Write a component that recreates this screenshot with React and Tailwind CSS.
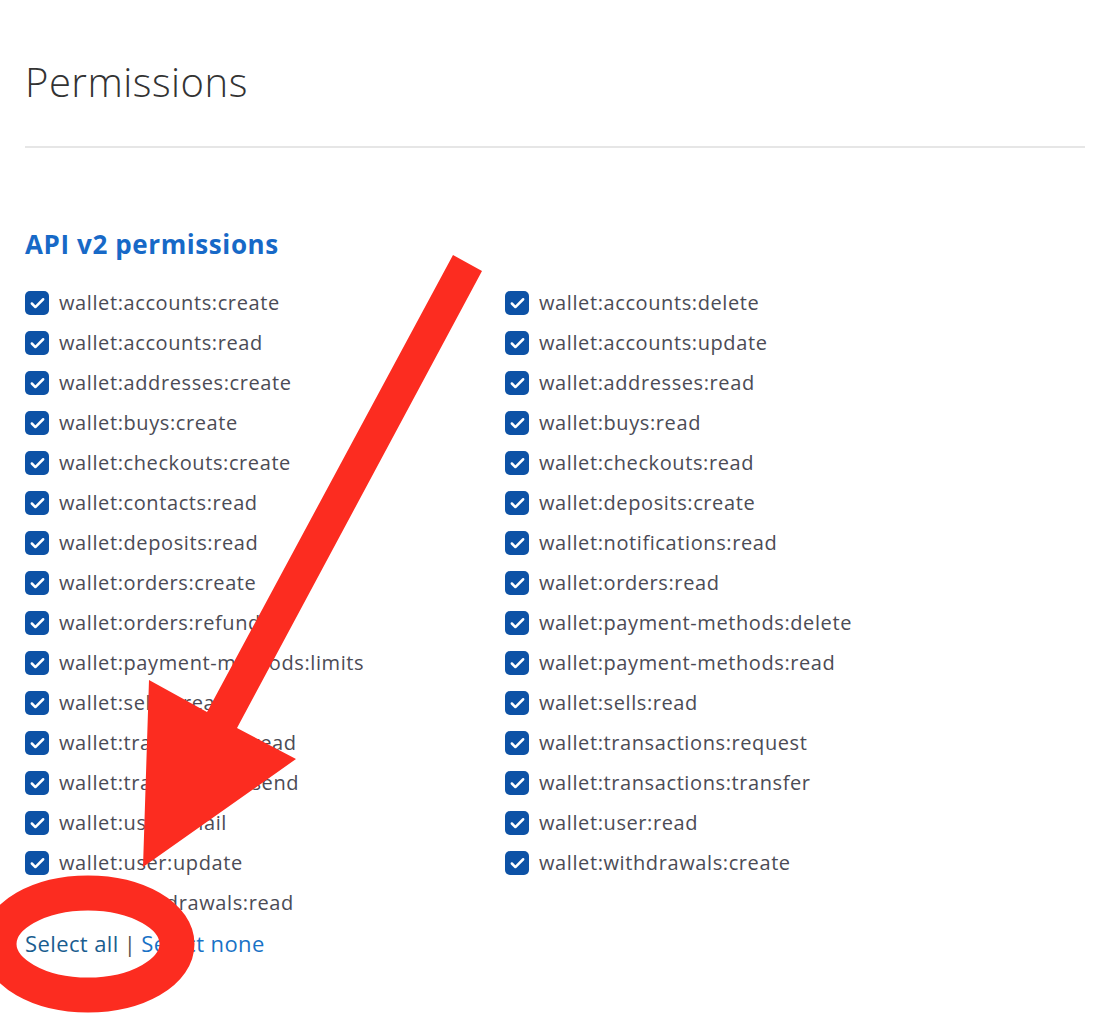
import { Check } from 'lucide-react'

const left = [
  'wallet:accounts:create',
  'wallet:accounts:read',
  'wallet:addresses:create',
  'wallet:buys:create',
  'wallet:checkouts:create',
  'wallet:contacts:read',
  'wallet:deposits:read',
  'wallet:orders:create',
  'wallet:orders:refund',
  'wallet:payment-methods:limits',
  'wallet:sells:create',
  'wallet:transactions:read',
  'wallet:transactions:send',
  'wallet:user:email',
  'wallet:user:update',
  'wallet:withdrawals:read',
]

const right = [
  'wallet:accounts:delete',
  'wallet:accounts:update',
  'wallet:addresses:read',
  'wallet:buys:read',
  'wallet:checkouts:read',
  'wallet:deposits:create',
  'wallet:notifications:read',
  'wallet:orders:read',
  'wallet:payment-methods:delete',
  'wallet:payment-methods:read',
  'wallet:sells:read',
  'wallet:transactions:request',
  'wallet:transactions:transfer',
  'wallet:user:read',
  'wallet:withdrawals:create',
]

function Perm({ name }) {
  return (
    <label className="flex items-center h-10 gap-[10px]">
      <span className="w-6 h-6 rounded-[5px] bg-[#0d52a6] flex items-center justify-center">
        <Check className="w-[17px] h-[17px] text-white" strokeWidth={3.5} />
      </span>
      <span className="text-[20px] text-[#4b4b55] tracking-[0.6px]">{name}</span>
    </label>
  )
}

export default function App() {
  return (
    <div className="relative min-h-[1023px] bg-white px-[25px] font-['Open_Sans',sans-serif] overflow-hidden">
      <h1 className="pt-[56px] pb-[38px] text-[40px] leading-[52px] font-light text-[#333] tracking-[0.5px]">
        Permissions
      </h1>
      <hr className="border-t-2 border-[#e6e6e6]" />

      <h2 className="mt-[76px] text-[26px] leading-[40px] font-bold text-[#1769c7] tracking-[0.6px]">
        API v2 permissions
      </h2>

      <div className="mt-[19px] grid grid-cols-[480px_1fr]">
        <div className="flex flex-col">
          {left.map((p) => (
            <Perm key={p} name={p} />
          ))}
        </div>
        <div className="flex flex-col">
          {right.map((p) => (
            <Perm key={p} name={p} />
          ))}
        </div>
      </div>

      <div className="text-[22px] leading-10 flex items-center gap-[5px] tracking-[0.4px]">
        <a className="text-[#1a5d8f]">Select all</a>
        <span className="text-[#555]">|</span>
        <a className="text-[#1872c6]">Select none</a>
      </div>

      {/* red annotation drawn on top of the screenshot */}
      <svg className="absolute inset-0 pointer-events-none" width="1110" height="1023" viewBox="0 0 1110 1023">
        <polygon
          fill="#fc2c20"
          points="453,255 482,271 237,728 296,759 143,867 149,680 207,712"
        />
        <ellipse cx="88" cy="944" rx="89" ry="51" fill="none" stroke="#fc2c20" strokeWidth="35" />
      </svg>
    </div>
  )
}
